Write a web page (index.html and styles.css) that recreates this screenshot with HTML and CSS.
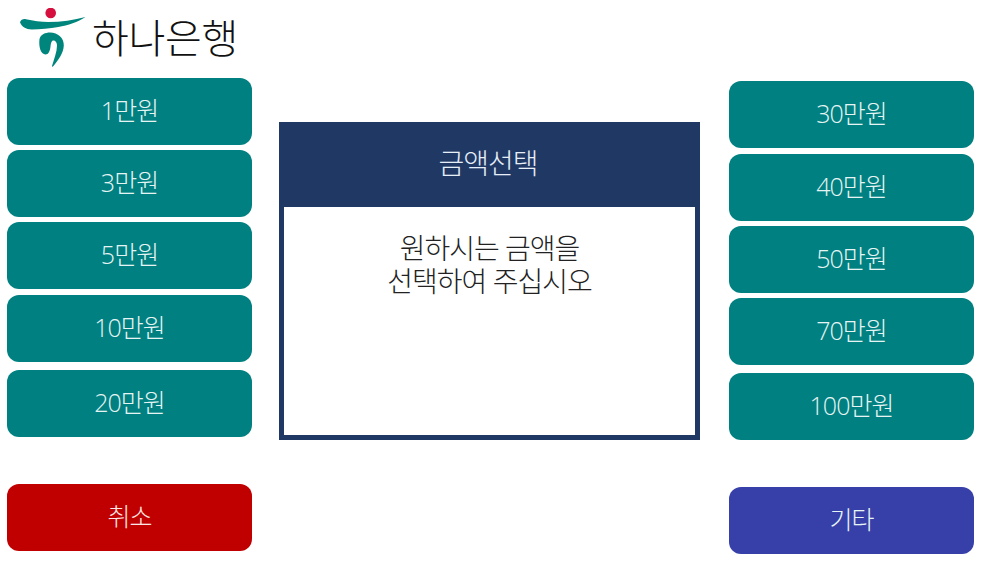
FILE: index.html
```html
<html>
  <head>
    <title>금액선택</title>
    <link rel="stylesheet" href="styles.css">
  </head>

  <body>
    <div class="wrapper">
      <div class="coluna colunaEsquerda">
        <div class="logo">
          <svg class="logoIcone" width="66" height="60" viewBox="0 0 66 60">
            <circle cx="30.7" cy="5" r="5.3" fill="#d5103f"/>
            <path d="M0 14.3C1 11.5 3 10.8 6 11.2C13 12.5 21 14 28.3 14C41 14 54 12 65.5 9C58 14 48 17.5 38.3 19C30 20.5 20 21.5 11.7 21.5C6 21.5 1.5 18.5 0 14.3Z" fill="#00857c"/>
            <path d="M19.5 31C20.5 26.5 25.5 24.5 30 24.5C38 24.5 44 30 43.8 37.5C43.5 45.5 38 52.5 33 58.5C32.5 59 32 58.5 32 58C34 51 37 44 37 37.5C37 34.5 35.5 32.5 33.5 32.5C31.5 32.5 31 35 30.5 38.5C30 43 28.5 46.5 25.5 46.5C20.5 46.5 18.5 38 19.5 31Z" fill="#00857c"/>
          </svg>
          <span class="logoTexto">하나은행</span>
        </div>
        <button class="botao verde">1만원</button>
        <button class="botao verde m5">3만원</button>
        <button class="botao verde m5">5만원</button>
        <button class="botao verde m6">10만원</button>
        <button class="botao verde m8">20만원</button>
        <button class="botao vermelho m47">취소</button>
      </div>

      <div class="painel">
        <div class="painelTitulo">금액선택</div>
        <div class="painelTexto">원하시는 금액을<br>선택하여 주십시오</div>
      </div>

      <div class="coluna colunaDireita">
        <button class="botao verde">30만원</button>
        <button class="botao verde m6">40만원</button>
        <button class="botao verde m5">50만원</button>
        <button class="botao verde m5">70만원</button>
        <button class="botao verde m8">100만원</button>
        <button class="botao azul m47">기타</button>
      </div>
    </div>
  </body>
</html>
```

FILE: styles.css
```css
* {
  margin: 0;
  padding: 0;
  box-sizing: border-box;
}

body {
  background: #fff;
  font-family: "Open Sans", "Noto Sans CJK KR", sans-serif;
  font-weight: 300;
  overflow: hidden;
}

.wrapper {
  display: flex;
  align-items: flex-start;
  width: 983px;
  height: 563px;
  padding-left: 7px;
}

.coluna {
  display: flex;
  flex-direction: column;
  width: 245px;
}

.colunaDireita {
  padding-top: 81px;
  margin-left: 29px;
}

.logo {
  display: flex;
  align-items: flex-start;
  height: 78px;
  padding: 8px 0 0 13px;
}

.logoTexto {
  margin: 2px 0 0 6px;
  font-size: 40px;
  line-height: 56px;
  letter-spacing: -0.3px;
  color: #111;
  white-space: nowrap;
}

.botao {
  display: block;
  width: 245px;
  height: 67px;
  padding-bottom: 5px;
  border: 0;
  border-radius: 12px;
  font-family: inherit;
  font-weight: 300;
  font-size: 25px;
  letter-spacing: -1px;
  color: #e6f4f4;
}

.verde {
  background: #008080;
}

.vermelho {
  background: #c00000;
  color: #fbe6e6;
}

.azul {
  background: #3640a8;
}

.m5 {
  margin-top: 5px;
}

.m6 {
  margin-top: 6px;
}

.m8 {
  margin-top: 8px;
}

.m47 {
  margin-top: 47px;
}

.painel {
  width: 421px;
  height: 318px;
  margin: 122px 0 0 27px;
  border: 5px solid #1f3864;
  background: #fff;
}

.painelTitulo {
  height: 80px;
  padding: 11px 3px 0 0;
  background: #1f3864;
  color: #e6eef8;
  font-size: 28px;
  line-height: 50px;
  letter-spacing: -1px;
  text-align: center;
}

.painelTexto {
  padding-top: 25px;
  color: #222;
  font-size: 28px;
  line-height: 33px;
  letter-spacing: -1px;
  text-align: center;
}
```
